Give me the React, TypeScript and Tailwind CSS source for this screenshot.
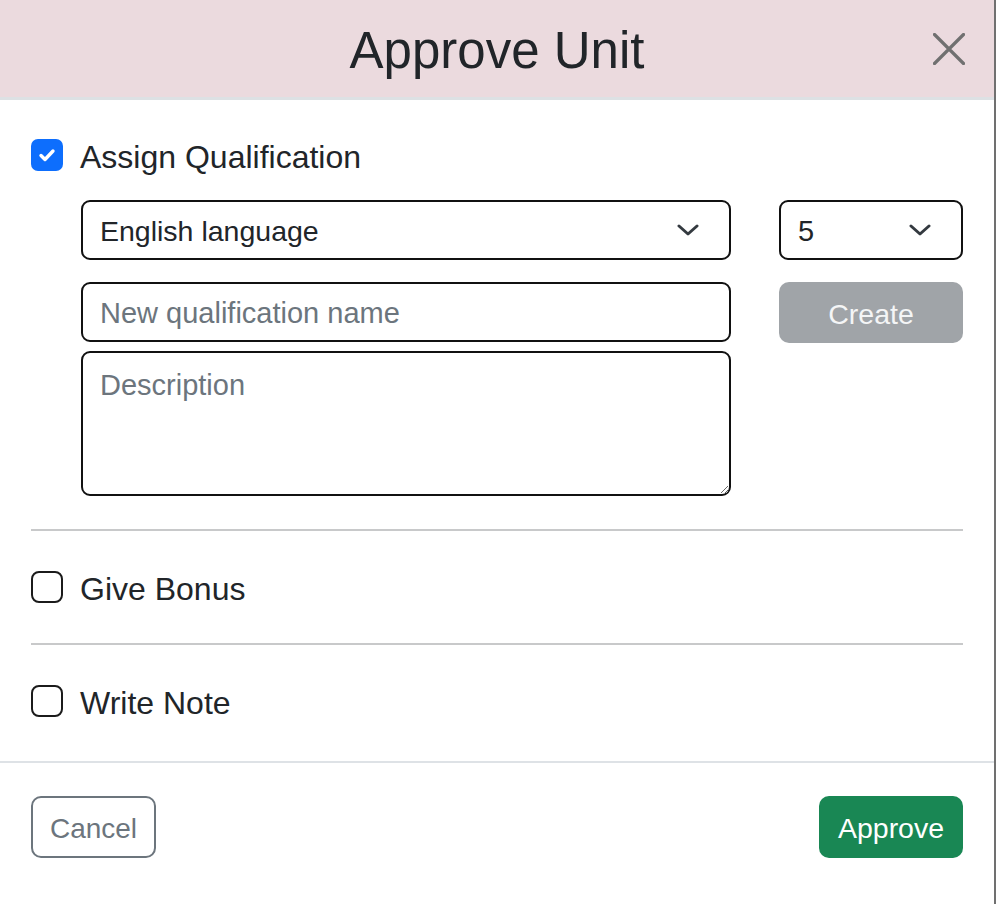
import React from "react";

function Check({ checked }: { checked?: boolean }) {
  if (checked) {
    return (
      <span className="flex h-[32px] w-[32px] shrink-0 items-center justify-center rounded-[7px] bg-[#0d6efd]">
        <svg width="20" height="20" viewBox="0 0 20 20" fill="none">
          <path d="M4 10.5l4 4 8-8.5" stroke="#fff" strokeWidth="3.4" strokeLinecap="round" strokeLinejoin="round" />
        </svg>
      </span>
    );
  }
  return <span className="h-[32px] w-[32px] shrink-0 rounded-[8px] border-2 border-[#1b1b1b] bg-white" />;
}

function Chevron() {
  return (
    <svg width="22" height="14" viewBox="0 0 22 14" fill="none">
      <path d="M2 3l9 8 9-8" stroke="#343a40" strokeWidth="3" strokeLinecap="round" strokeLinejoin="round" />
    </svg>
  );
}

function CheckRow({ label, checked }: { label: string; checked?: boolean }) {
  return (
    <label className="flex h-[48px] items-center gap-[17px] text-[32px] text-[#212529]">
      <Check checked={checked} />
      <span className="pt-[4px]">{label}</span>
    </label>
  );
}

export default function App() {
  return (
    <div
      className="flex h-[904px] w-[996px] flex-col border-r-2 border-[#707070] bg-white"
      style={{ fontFamily: '"Liberation Sans", Arial, sans-serif' }}
    >
      {/* header */}
      <div className="grid h-[100px] shrink-0 grid-cols-[1fr_auto_1fr] items-center border-b-[3px] border-[#dde1e4] bg-[#ebdade] px-[27px]">
        <div />
        <h1 className="pt-[4px] text-[51px] leading-none text-[#212529]">Approve Unit</h1>
        <div className="flex justify-end">
          <button className="flex h-[36px] w-[36px] items-center justify-center">
            <svg width="32" height="32" viewBox="0 0 32 32" fill="none">
              <path d="M1.5 1.5l29 29M30.5 1.5l-29 29" stroke="#707070" strokeWidth="3.2" strokeLinecap="round" />
            </svg>
          </button>
        </div>
      </div>

      {/* body */}
      <div className="px-[31px]">
        <div className="pt-[31px] pb-[33px]">
          <CheckRow label="Assign Qualification" checked />
          <div className="mt-[21px] ml-[50px] grid grid-cols-[650px_184px] gap-x-[48px]">
            <div className="flex flex-col">
              <div className="flex h-[60px] items-center justify-between rounded-[9px] border-2 border-[#111] pl-[17px] pr-[30px] text-[28.5px] text-[#212529]">
                <span className="pt-[3px]">English language</span>
                <Chevron />
              </div>
              <input
                className="mt-[22px] h-[60px] rounded-[9px] border-2 border-[#111] px-[17px] pt-[3px] text-[29px] text-[#212529] outline-none placeholder:text-[#6c757d]"
                placeholder="New qualification name"
              />
              <textarea
                className="mt-[9px] h-[145px] rounded-[9px] border-2 border-[#111] px-[17px] pt-[14px] text-[29px] leading-[1.3] text-[#212529] outline-none placeholder:text-[#6c757d]"
                placeholder="Description"
              />
            </div>
            <div className="flex flex-col">
              <div className="flex h-[60px] items-center justify-between rounded-[9px] border-2 border-[#111] pl-[17px] pr-[30px] text-[29px] text-[#212529]">
                <span className="pt-[3px]">5</span>
                <Chevron />
              </div>
              <button className="mt-[22px] h-[61px] rounded-[10px] bg-[#a0a4a8] pt-[3px] text-[28.5px] text-[#f4f5f6]">
                Create
              </button>
            </div>
          </div>
        </div>
        <div className="h-[2px] bg-[#c8c9ca]" />
        <div className="py-[32px]">
          <CheckRow label="Give Bonus" />
        </div>
        <div className="h-[2px] bg-[#c8c9ca]" />
        <div className="pt-[32px] pb-[36px]">
          <CheckRow label="Write Note" />
        </div>
      </div>

      {/* footer */}
      <div className="flex items-start justify-between border-t-2 border-[#dee2e6] px-[31px] pt-[33px]">
        <button className="h-[62px] w-[125px] rounded-[10px] border-2 border-[#6c757d] pt-[3px] text-[28px] text-[#6c757d]">
          Cancel
        </button>
        <button className="h-[62px] w-[144px] rounded-[10px] bg-[#198754] pt-[3px] text-[28.5px] text-white">
          Approve
        </button>
      </div>
    </div>
  );
}
